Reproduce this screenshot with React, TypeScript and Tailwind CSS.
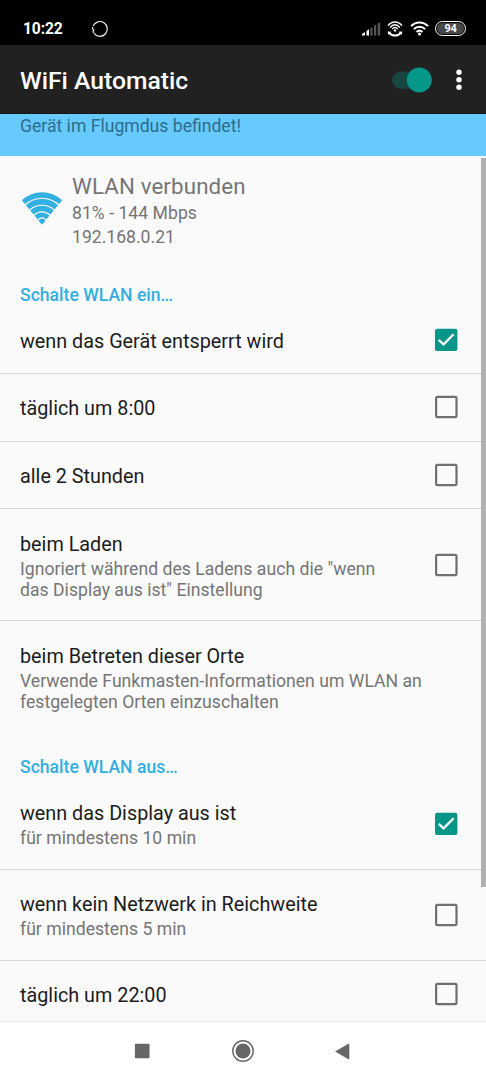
import React from 'react';

function Checkbox({ checked = false }: { checked?: boolean }) {
  return (
    <svg className="size-[30px] shrink-0" viewBox="0 0 30 30" fill="none">
      {checked ? (
        <>
          <rect x="4" y="3.7" width="22.4" height="22.4" rx="2.2" fill="#079588" />
          <path d="M7.7 14.8 12.6 19.4 22.6 9.2" stroke="#fafafa" strokeWidth="2.3" />
        </>
      ) : (
        <rect x="5.1" y="4.8" width="20.4" height="20.4" rx="1.3" stroke="#6f6f6f" strokeWidth="2.2" />
      )}
    </svg>
  );
}

type RowProps = {
  title: string;
  lines?: string[];
  height: string;
  offset: string;
  checked?: boolean;
  divider?: boolean;
};

function Row({ title, lines = [], height, offset, checked, divider = true }: RowProps) {
  return (
    <div className={`${height} ${divider ? 'border-b border-[#d6d6d6]' : ''} flex shrink-0 items-center justify-between pl-5 pr-[25px]`}>
      <div className={offset}>
        <div className="text-[19.8px] leading-[26px] text-[#1c1c1c] whitespace-nowrap">{title}</div>
        {lines.length > 0 && (
          <div className="pt-px">
            {lines.map((line) => (
              <div key={line} className="text-[17.6px] leading-[21px] tracking-[0.02px] text-[#757575] whitespace-nowrap">
                {line}
              </div>
            ))}
          </div>
        )}
      </div>
      {checked !== undefined && <Checkbox checked={checked} />}
    </div>
  );
}

function StatusBar() {
  return (
    <div className="flex h-[45px] shrink-0 items-center bg-black pt-3 pl-[23px] pr-[20px] text-white">
      <span className="w-[68px] text-[15.6px] leading-4 font-bold tracking-[-0.1px]">10:22</span>
      <svg className="size-[18px]" viewBox="0 0 18 18" fill="none">
        <path d="M2.1 6A7.4 7.4 0 1 1 3 13.4M2.6 12.9A7.4 7.4 0 0 1 1.9 11M1.9 7Q1.5 8 1.6 9" stroke="#eee" strokeWidth="1.2" />
        <path d="M1 9 3.9 9.7 2.4 11.6Z" fill="#fff" />
      </svg>
      <div className="ml-auto flex items-center">
        <svg className="mr-[6px] h-[14px] w-[19px]" viewBox="0 0 19 14">
          <path d="M0 13.5V12L3 10V13.5Z" fill="#fff" />
          <path d="M4.5 13.5V9L7 7.2V13.5Z" fill="#fff" />
          <path d="M8.3 13.5V6.5L10.5 5V13.5ZM12 13.5V4L14.2 2.5V13.5ZM15.7 13.5V1.8L18.2 0V13.5Z" fill="#555" />
        </svg>
        <svg className="mr-[7px] h-4 w-4" viewBox="0 0 16 16" fill="none" stroke="#fff" strokeWidth="1.4">
          <path d="M1 4.7C4.8-.3 11.2-.3 15 4.7M3.1 6.6C5.9 2.8 10.1 2.8 12.9 6.6M5.3 8.1C7 6 9 6 10.7 8.1" />
          <circle cx="8" cy="9.5" r="1.2" fill="#fff" stroke="none" />
          <path d="M2.2 11.8C4.9 15.4 11.1 15.4 13.8 11.8" strokeWidth="2" />
          <path d="M.6 10.4 4.4 10.8 1.3 13.7ZM15.4 10.4 11.6 10.8 14.7 13.7Z" fill="#fff" stroke="none" />
        </svg>
        <svg className="mr-[6px] h-[15px] w-[19px]" viewBox="0 0 20 15" fill="none" stroke="#fff" strokeWidth="2.1">
          <path d="M1 5C6.2-.2 13.8-.2 19 5M4 8.2C7.4 4.8 12.6 4.8 16 8.2M6.9 11.2C8.8 9.4 11.2 9.4 13.1 11.2" />
          <circle cx="10" cy="13.2" r="1.6" fill="#fff" stroke="none" />
        </svg>
        <div className="flex h-[15px] w-[31px] items-center justify-center rounded-full border-[1.5px] border-white p-[1px]">
          <div className="flex h-full w-full items-center justify-center rounded-full bg-[#484848] text-[11px] leading-[11px] font-bold tracking-[-0.3px]">94</div>
        </div>
      </div>
    </div>
  );
}

function AppBar() {
  return (
    <div className="flex h-[69px] shrink-0 items-center bg-[#212121] pl-5 pr-[24.5px] border-b border-[#171717]">
      <h1 className="text-[24.7px] leading-8 font-medium text-white mt-[4px]">WiFi Automatic</h1>
      <svg className="ml-auto mt-[1px] h-[26px] w-10" viewBox="0 0 40 26">
        <rect x="0" y="4.4" width="35" height="17.4" rx="8.7" fill="#194540" />
        <circle cx="27.3" cy="13" r="12.5" fill="#059788" />
      </svg>
      <svg className="ml-[23.5px] mt-[2px] h-[22px] w-[6px]" viewBox="0 0 6 22" fill="#fff">
        <circle cx="3" cy="3.2" r="2.7" />
        <circle cx="3" cy="10.7" r="2.7" />
        <circle cx="3" cy="18.2" r="2.7" />
      </svg>
    </div>
  );
}

function ConnectionStatus() {
  return (
    <div className="flex h-[111px] shrink-0 items-center pl-[21px] text-[#757575]">
      <svg className="mt-[-6px] h-[34px] w-[42px]" viewBox="0 0 42 34">
        <path d="M.8 8.2C12.5-2.5 29.5-2.5 41.2 8.2L21 32.8Z" fill="#33b0e2" />
        <path
          d="M4 13C14 4 28 4 38 13M8.4 18.2C15.6 11.6 26.4 11.6 33.6 18.2M12.8 23.3C17.6 18.6 24.4 18.6 29.2 23.3M17 27.7C19.4 25.6 22.6 25.6 25 27.7"
          fill="none"
          stroke="#fafafa"
          strokeWidth="1.2"
        />
      </svg>
      <div className="ml-[9px] -mt-[2px]">
        <div className="text-[22.3px] leading-[27px] tracking-[0.13px]">WLAN verbunden</div>
        <div className="pt-px text-[17.6px] leading-6 tracking-[0.03px]">81% - 144 Mbps</div>
        <div className="text-[17.6px] leading-6">192.168.0.21</div>
      </div>
    </div>
  );
}

function SectionHeader({ children, className }: { children: React.ReactNode; className: string }) {
  return (
    <div className={`${className} flex shrink-0 items-center pl-5 text-[17.6px] leading-5 font-medium text-[#35afe0]`}>
      {children}
    </div>
  );
}

export default function App() {
  return (
    <div className="flex h-[1080px] w-[486px] flex-col overflow-hidden bg-[#fafafa] font-['Roboto',sans-serif]">
      <StatusBar />
      <AppBar />
      <div className="relative flex h-[907px] shrink-0 flex-col overflow-hidden">
        <div className="h-[42px] shrink-0 bg-[#66caff] pl-5 pt-[2px] text-[17.6px] leading-5 text-[#2c6d8c]">
          Gerät im Flugmdus befindet!
        </div>
        <ConnectionStatus />
        <SectionHeader className="h-[39.5px] pt-[17px]">Schalte WLAN ein…</SectionHeader>
        <Row title="wenn das Gerät entsperrt wird" height="h-[67.5px]" offset="pt-[4px]" checked />
        <Row title="täglich um 8:00" height="h-[67.5px]" offset="pt-[4px]" checked={false} />
        <Row title="alle 2 Stunden" height="h-[67.5px]" offset="pt-[4px]" checked={false} />
        <Row
          title="beim Laden"
          lines={['Ignoriert während des Ladens auch die "wenn', 'das Display aus ist" Einstellung']}
          height="h-[112px]"
          offset="pt-[3px]"
          checked={false}
        />
        <Row
          title="beim Betreten dieser Orte"
          lines={['Verwende Funkmasten-Informationen um WLAN an', 'festgelegten Orten einzuschalten']}
          height="h-[112px]"
          offset="pt-[2px]"
          divider={false}
        />
        <SectionHeader className="h-[45.5px] pt-[22px]">Schalte WLAN aus…</SectionHeader>
        <Row title="wenn das Display aus ist" lines={['für mindestens 10 min']} height="h-[91.5px]" offset="pt-[3px]" checked />
        <Row
          title="wenn kein Netzwerk in Reichweite"
          lines={['für mindestens 5 min']}
          height="h-[91px]"
          offset="pt-[2px]"
          checked={false}
        />
        <Row title="täglich um 22:00" height="h-[66.5px]" offset="pt-[3px]" checked={false} divider={false} />
        <div className="absolute right-0 top-[44px] h-[729px] w-[5px] bg-[#b0b0b0]" />
      </div>
      <div className="flex h-[59px] shrink-0 items-center justify-between border-t border-[#e8e8e8] bg-white pl-[134px] pr-[135px]">
        <svg className="size-4" viewBox="0 0 16 16">
          <rect x=".9" y=".7" width="14.6" height="14.6" rx=".7" fill="#666" />
        </svg>
        <svg className="size-[22px]" viewBox="0 0 22 22">
          <circle cx="11" cy="11" r="10.2" fill="none" stroke="#666" strokeWidth="1.4" />
          <circle cx="11" cy="11" r="7.5" fill="#666" />
        </svg>
        <svg className="h-[17px] w-4" viewBox="0 0 16 17">
          <path d="M.5 8.5 14 .8V16.2Z" fill="#666" stroke="#666" strokeWidth=".6" strokeLinejoin="round" />
        </svg>
      </div>
    </div>
  );
}
